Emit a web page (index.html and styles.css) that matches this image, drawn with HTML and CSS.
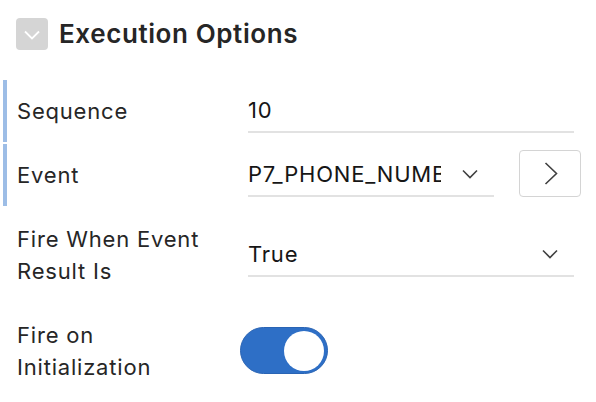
FILE: index.html
```html
<!DOCTYPE html>
<html>
<head>
<meta charset="utf-8">
<link rel="stylesheet" href="styles.css">
</head>
<body>
<div class="panel">
  <div class="header">
    <button class="collapse" aria-label="Collapse">
      <svg width="16" height="10" viewBox="0 0 16 10"><path d="M1 1.5 L8 8.5 L15 1.5" fill="none" stroke="#ffffff" stroke-width="1.8"/></svg>
    </button>
    <h2 class="title">Execution Options</h2>
  </div>

  <div class="row marked">
    <div class="label">Sequence</div>
    <div class="value">
      <div class="field"><span class="text">10</span></div>
    </div>
  </div>

  <div class="row marked">
    <div class="label">Event</div>
    <div class="value">
      <div class="field select short"><span class="text">P7_PHONE_NUMBER</span>
        <svg class="chev" width="16" height="10" viewBox="0 0 16 10"><path d="M1 1.5 L8 8.5 L15 1.5" fill="none" stroke="#404040" stroke-width="1.6"/></svg>
      </div>
      <button class="go" aria-label="Go">
        <svg width="14" height="23" viewBox="0 0 14 23"><path d="M1.5 1 L12.5 11.5 L1.5 22" fill="none" stroke="#404040" stroke-width="1.6"/></svg>
      </button>
    </div>
  </div>

  <div class="row">
    <div class="label">Fire When Event<br>Result Is</div>
    <div class="value">
      <div class="field select"><span class="text">True</span>
        <svg class="chev" width="16" height="10" viewBox="0 0 16 10"><path d="M1 1.5 L8 8.5 L15 1.5" fill="none" stroke="#404040" stroke-width="1.6"/></svg>
      </div>
    </div>
  </div>

  <div class="row">
    <div class="label">Fire on<br>Initialization</div>
    <div class="value">
      <div class="toggle"><span class="knob"></span></div>
    </div>
  </div>
</div>
</body>
</html>
```

FILE: styles.css
```css
* { box-sizing: border-box; }
html, body { margin: 0; padding: 0; background: #ffffff; }
body { font-family: Inter, "Noto Sans", sans-serif; color: #262626; }

.panel { padding-top: 18px; }

.header {
  display: flex;
  align-items: center;
  gap: 11px;
  padding-left: 16px;
  margin-bottom: 30px;
}
.collapse {
  width: 32px; height: 32px;
  border: 0; border-radius: 4px;
  background: #d5d5d5;
  display: flex; align-items: center; justify-content: center;
  padding: 0; padding-top: 2px;
}
.title {
  margin: 0;
  font-size: 26px;
  font-weight: 600;
  letter-spacing: 0.6px;
  line-height: 32px;
  color: #262626;
}

.row {
  display: flex;
  align-items: center;
  margin-left: 3px;
  border-left: 4px solid transparent;
  padding: 9px 0 9px 10px;
  margin-bottom: 2px;
}
.row.marked { border-left-color: #9dbde6; }

.label {
  flex: 0 0 231px;
  padding: 6px 0;
  font-size: 22px;
  letter-spacing: 0.8px;
  line-height: 32px;
  color: #262626;
}

.value {
  flex: 0 0 334px;
  display: flex;
  align-items: flex-end;
}

.field {
  flex: 0 0 326px;
  height: 44px;
  border-bottom: 2px solid #e2e2e2;
  display: flex;
  align-items: center;
  font-size: 22px;
  letter-spacing: 0.8px;
  color: #161616;
}
.field .text { white-space: nowrap; overflow: hidden; }
.select { padding-right: 16px; }
.select .text { flex: 1; }
.select.short { flex: 0 0 246px; }
.select.short .text { flex: 0 0 193px; }
.select.short .chev { margin-left: auto; }

.go {
  margin-left: 25px;
  margin-top: -3px;
  width: 62px; height: 47px;
  border: 1.5px solid #d4d4d4;
  border-radius: 4px;
  background: #ffffff;
  display: flex; align-items: center; justify-content: center;
  padding: 0 0 0 1px;
}

.toggle {
  margin-left: -8px;
  margin-top: -2px;
  margin-bottom: -1px;
  width: 88px; height: 47px;
  border-radius: 24px;
  background: #2e6fc6;
  border: 1px solid #2a64b4;
  display: flex;
  align-items: center;
  justify-content: flex-end;
  padding-right: 3px;
}
.knob {
  width: 40px; height: 40px;
  border-radius: 50%;
  background: #ffffff;
}
```
